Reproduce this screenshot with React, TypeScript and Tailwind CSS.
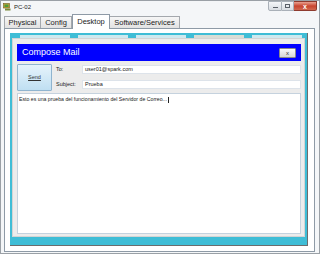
import React from "react";

const font = { fontFamily: '"Liberation Sans", Arial, sans-serif' };

function PcIcon() {
  return (
    <svg width="8" height="8" viewBox="0 0 8 8">
      <rect x="0.5" y="0.5" width="6" height="4.5" fill="#c9a23a" stroke="#6b5a1e" strokeWidth="0.6" />
      <rect x="1.5" y="1.5" width="4" height="2.5" fill="#4f9a3a" />
      <rect x="2" y="5.5" width="5.5" height="2" fill="#7a8a3a" />
    </svg>
  );
}

export default function App() {
  return (
    <div
      className="w-[320px] h-[254px] bg-[#f4f6f8] border border-[#9aa0a6] flex flex-col overflow-hidden text-black"
      style={font}
    >
      {/* title bar */}
      <div className="h-[12px] flex items-start">
        <div className="flex items-center gap-[3px] pl-[2px] pt-[2px]">
          <PcIcon />
          <span className="text-[6px] leading-[8px] text-[#222]">PC-02</span>
        </div>
        <div className="ml-auto mr-[2px] flex h-[10px]">
          <div className="w-[14px] h-[10px] border border-[#a9b0b8] rounded-bl-[2px] bg-gradient-to-b from-[#f4f6f8] to-[#d9dde2] flex items-end justify-center pb-[2px]">
            <div className="w-[5px] h-[1px] bg-[#5a6068]" />
          </div>
          <div className="w-[12px] h-[10px] border-y border-r border-[#a9b0b8] bg-gradient-to-b from-[#f4f6f8] to-[#d9dde2] flex items-center justify-center">
            <div className="w-[5px] h-[4px] border border-[#5a6068]" />
          </div>
          <div className="w-[23px] h-[10px] border-y border-r border-[#8e3a2e] rounded-br-[2px] bg-gradient-to-b from-[#e8a090] via-[#c8432e] to-[#d06850] flex items-center justify-center">
            <span className="text-[7px] leading-[7px] font-bold text-white">x</span>
          </div>
        </div>
      </div>

      {/* tabs */}
      <div className="h-[15px] flex items-end pl-[3px] text-[7.5px] text-[#222]">
        <div className="h-[12px] w-[37px] border border-[#a4a8ad] border-b-0 bg-gradient-to-b from-[#f6f6f6] to-[#e2e2e2] flex items-center justify-center">Physical</div>
        <div className="h-[12px] w-[31px] border-t border-r border-[#a4a8ad] bg-gradient-to-b from-[#f6f6f6] to-[#e2e2e2] flex items-center justify-center">Config</div>
        <div className="h-[15px] w-[38px] border-t border-x border-[#8e9aa6] bg-white flex items-center justify-center -mb-[1px] relative z-10">Desktop</div>
        <div className="h-[12px] w-[70px] border-t border-r border-[#a4a8ad] bg-gradient-to-b from-[#f6f6f6] to-[#e2e2e2] flex items-center justify-center">Software/Services</div>
      </div>

      {/* panel */}
      <div className="ml-[3px] mr-[4px] h-[224px] border border-[#8e9aa6] bg-white pl-[5px] pr-[6px] pt-[4px] pb-[5px] flex">
        <div className="flex-1 bg-[#3fbdd6] border-r border-b border-[#6c6c6c] flex flex-col">
          {/* desktop icon strip */}
          <div className="h-[5px] flex items-end gap-[8px] pl-[10px]">
            <div className="w-[50px] h-[3px] bg-[#cfe9ef]" />
            <div className="w-[50px] h-[3px] bg-[#cfe9ef]" />
            <div className="w-[50px] h-[3px] bg-[#cfe9ef]" />
            <div className="w-[50px] h-[3px] bg-[#d8ddd6]" />
            <div className="w-[50px] h-[3px] bg-[#cfe9ef]" />
          </div>
          {/* compose window */}
          <div className="mx-[2px] mb-[8px] flex-1 bg-[#ececec] border border-[#d4d4d4] pl-[4px] pr-[3px] pt-[5px] pb-[2px] flex flex-col">
            <div className="h-[17px] bg-[#0000ff] flex items-center pl-[5px] pr-[5px]">
              <span className="text-[9px] text-white leading-none">Compose Mail</span>
              <div className="ml-auto w-[17px] h-[10px] border border-[#8a8a8a] rounded-[1px] bg-gradient-to-b from-[#fafafa] to-[#d6d6d6] flex items-center justify-center">
                <span className="text-[6px] leading-none text-[#333]">x</span>
              </div>
            </div>
            <div className="flex mt-[3px] h-[27px]">
              <div className="w-[35px] h-[27px] border border-[#8fb4cf] rounded-[1px] bg-gradient-to-b from-[#e6f3fb] to-[#bfdff2] flex items-center justify-center">
                <span className="text-[5.5px] text-[#333] underline">Send</span>
              </div>
              <div className="flex-1 flex flex-col pl-[4px] pt-[1px] gap-[6px]">
                <div className="flex items-center h-[9px]">
                  <span className="w-[26px] text-[5.5px] text-[#222]">To:</span>
                  <div className="flex-1 h-[9px] bg-white border border-[#dde3ea] flex items-center pl-[2px] text-[5.5px] text-[#222]">user01@spark.com</div>
                </div>
                <div className="flex items-center h-[9px]">
                  <span className="w-[26px] text-[5.5px] text-[#222]">Subject:</span>
                  <div className="flex-1 h-[9px] bg-white border border-[#dde3ea] flex items-center pl-[2px] text-[5.5px] text-[#222]">Prueba</div>
                </div>
              </div>
            </div>
            <div className="mt-[2px] flex-1 bg-white border border-[#c5d2de] pl-[1px] pt-[2px]">
              <div className="text-[5.2px] leading-[7px] text-[#222] flex items-center">
                <span>Esto es una prueba del funcionamiento del Servidor de Correo...</span>
                <span className="w-[0.7px] h-[6px] bg-[#222] ml-[1px]" />
              </div>
            </div>
          </div>
        </div>
      </div>
    </div>
  );
}
